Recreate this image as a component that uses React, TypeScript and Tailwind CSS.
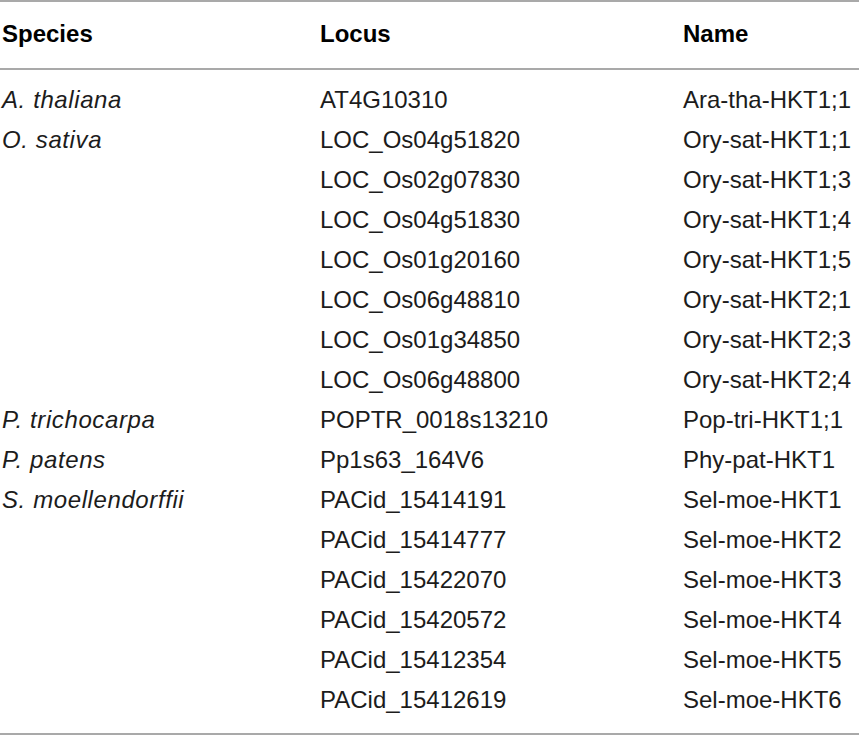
import React from "react";

type Row = { species?: string; locus: string; name: string };

const rows: Row[] = [
  { species: "A. thaliana", locus: "AT4G10310", name: "Ara-tha-HKT1;1" },
  { species: "O. sativa", locus: "LOC_Os04g51820", name: "Ory-sat-HKT1;1" },
  { locus: "LOC_Os02g07830", name: "Ory-sat-HKT1;3" },
  { locus: "LOC_Os04g51830", name: "Ory-sat-HKT1;4" },
  { locus: "LOC_Os01g20160", name: "Ory-sat-HKT1;5" },
  { locus: "LOC_Os06g48810", name: "Ory-sat-HKT2;1" },
  { locus: "LOC_Os01g34850", name: "Ory-sat-HKT2;3" },
  { locus: "LOC_Os06g48800", name: "Ory-sat-HKT2;4" },
  { species: "P. trichocarpa", locus: "POPTR_0018s13210", name: "Pop-tri-HKT1;1" },
  { species: "P. patens", locus: "Pp1s63_164V6", name: "Phy-pat-HKT1" },
  { species: "S. moellendorffii", locus: "PACid_15414191", name: "Sel-moe-HKT1" },
  { locus: "PACid_15414777", name: "Sel-moe-HKT2" },
  { locus: "PACid_15422070", name: "Sel-moe-HKT3" },
  { locus: "PACid_15420572", name: "Sel-moe-HKT4" },
  { locus: "PACid_15412354", name: "Sel-moe-HKT5" },
  { locus: "PACid_15412619", name: "Sel-moe-HKT6" },
];

const cols = "grid grid-cols-[318px_363px_1fr] pl-[2px]";

export default function App() {
  return (
    <div className="w-[859px] h-[736px] bg-white text-[#1c1c1c] text-[24px] leading-[40px] font-['Liberation_Sans',Arial,sans-serif]">
      {/* Header */}
      <div className={`${cols} border-t-2 border-b-2 border-[#a9a9a9] pt-[12px] pb-[14px] font-bold text-black`}>
        <div>Species</div>
        <div>Locus</div>
        <div>Name</div>
      </div>

      {/* Body */}
      <div className="border-b-2 border-[#a9a9a9] pt-[10px] pb-[13px]">
        {rows.map((row, i) => (
          <div key={i} className={cols}>
            <div className="italic tracking-[0.6px]">{row.species ?? ""}</div>
            <div>{row.locus}</div>
            <div>{row.name}</div>
          </div>
        ))}
      </div>
    </div>
  );
}
